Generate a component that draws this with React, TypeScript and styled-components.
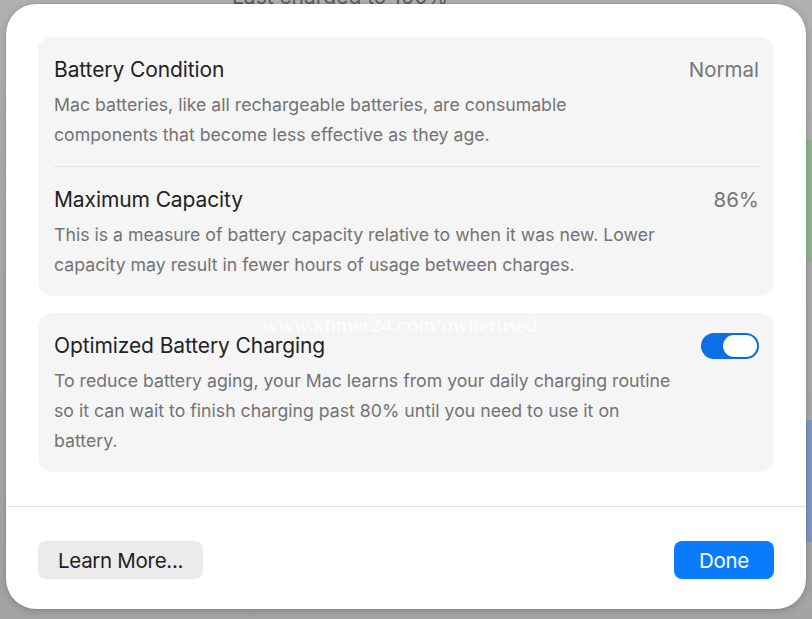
import React from "react";
import styled, { createGlobalStyle } from "styled-components";

const GlobalStyle = createGlobalStyle`
  html, body {
    margin: 0;
    padding: 0;
    background: #ababab;
  }
  body {
    font-family: Inter, "Noto Sans", "Liberation Sans", sans-serif;
    -webkit-font-smoothing: antialiased;
  }
`;

interface Section {
  title: string;
  value?: string;
  lines: string[];
}

const healthSections: Section[] = [
  {
    title: "Battery Condition",
    value: "Normal",
    lines: [
      "Mac batteries, like all rechargeable batteries, are consumable",
      "components that become less effective as they age.",
    ],
  },
  {
    title: "Maximum Capacity",
    value: "86%",
    lines: [
      "This is a measure of battery capacity relative to when it was new. Lower",
      "capacity may result in fewer hours of usage between charges.",
    ],
  },
];

const chargingLines = [
  "To reduce battery aging, your Mac learns from your daily charging routine",
  "so it can wait to finish charging past 80% until you need to use it on",
  "battery.",
];

const Description: React.FC<{ lines: string[] }> = ({ lines }) => (
  <StyledDescription>
    {lines.map((line, i) => (
      <StyledLine key={i}>{line}</StyledLine>
    ))}
  </StyledDescription>
);

const App: React.FC = () => {
  return (
    <>
      <GlobalStyle />
      <StyledDesktop>
        <StyledBehindText>Last charged to 100%</StyledBehindText>
        <StyledEdgeStrip $top={140} $height={122} $color="#8fb58c" />
        <StyledEdgeStrip $top={420} $height={122} $color="#7d99c2" />
        <StyledDialog>
          <StyledBody>
            <StyledCard>
              {healthSections.map((section, i) => (
                <React.Fragment key={section.title}>
                  {i > 0 && <StyledDivider />}
                  <StyledSection>
                    <StyledHeaderRow>
                      <StyledTitle>{section.title}</StyledTitle>
                      <StyledValue>{section.value}</StyledValue>
                    </StyledHeaderRow>
                    <Description lines={section.lines} />
                  </StyledSection>
                </React.Fragment>
              ))}
            </StyledCard>
            <StyledCard>
              <StyledWatermark>www.khmer24.com/ownerused</StyledWatermark>
              <StyledSection>
                <StyledHeaderRow>
                  <StyledTitle>Optimized Battery Charging</StyledTitle>
                  <StyledToggle $on>
                    <StyledKnob />
                  </StyledToggle>
                </StyledHeaderRow>
                <Description lines={chargingLines} />
              </StyledSection>
            </StyledCard>
          </StyledBody>
          <StyledFooter>
            <StyledButton>Learn More...</StyledButton>
            <StyledButton $primary>Done</StyledButton>
          </StyledFooter>
        </StyledDialog>
      </StyledDesktop>
    </>
  );
};
export default App;

const StyledDesktop = styled.div`
  position: relative;
  width: 812px;
  height: 619px;
  overflow: hidden;
  background: linear-gradient(180deg, #b0b0b0 0%, #a9a9a9 60%, #a4a4a4 100%);
  padding: 4px 6px 10px 6px;
  box-sizing: border-box;
  display: flex;
`;

const StyledBehindText = styled.div`
  position: absolute;
  top: -16px;
  left: 232px;
  font-size: 21px;
  color: #5c5c5c;
`;

const StyledEdgeStrip = styled.div<{ $top: number; $height: number; $color: string }>`
  position: absolute;
  right: 0;
  top: ${(p) => p.$top}px;
  height: ${(p) => p.$height}px;
  width: 8px;
  background: ${(p) => p.$color};
`;

const StyledDialog = styled.div`
  position: relative;
  flex: 1 1 auto;
  display: flex;
  flex-direction: column;
  background: #ffffff;
  border-radius: 30px;
  box-shadow: 0 2px 8px rgba(0, 0, 0, 0.18), 0 0 0 0.5px rgba(0, 0, 0, 0.12);
  overflow: hidden;
`;

const StyledBody = styled.div`
  display: flex;
  flex-direction: column;
  gap: 17px;
  padding: 33px 32px 34px 32px;
  border-bottom: 1px solid #e2e2e2;
`;

const StyledCard = styled.div`
  position: relative;
  display: flex;
  flex-direction: column;
  background: #f5f5f5;
  border-radius: 14px;
  padding: 0 15px 0 16px;
`;

const StyledSection = styled.div`
  display: flex;
  flex-direction: column;
  gap: 8px;
  padding: 21px 0 16px 0;
`;

const StyledDivider = styled.div`
  height: 1px;
  background: #e4e4e4;
`;

const StyledHeaderRow = styled.div`
  display: flex;
  align-items: center;
  justify-content: space-between;
  height: 24px;
`;

const StyledTitle = styled.div`
  font-size: 21px;
  line-height: 24px;
  color: #232323;
  letter-spacing: -0.1px;
`;

const StyledValue = styled.div`
  font-size: 20.5px;
  line-height: 24px;
  color: #777777;
`;

const StyledDescription = styled.div`
  display: flex;
  flex-direction: column;
  font-size: 17.7px;
  line-height: 30px;
  color: #737373;
`;

const StyledLine = styled.span`
  white-space: nowrap;
`;

const StyledToggle = styled.div<{ $on?: boolean }>`
  width: 58px;
  height: 26px;
  border-radius: 13px;
  background: ${(p) => (p.$on ? "#0b70e6" : "#dcdcdc")};
  box-sizing: border-box;
  padding: 2px;
  display: flex;
  justify-content: ${(p) => (p.$on ? "flex-end" : "flex-start")};
`;

const StyledKnob = styled.div`
  width: 34px;
  height: 22px;
  border-radius: 11px;
  background: #ffffff;
  box-shadow: 0 0.5px 1.5px rgba(0, 0, 0, 0.25);
`;

const StyledWatermark = styled.div`
  position: absolute;
  top: -1px;
  left: 224px;
  font-family: "Liberation Serif", serif;
  font-size: 22px;
  color: rgba(255, 255, 255, 0.85);
  pointer-events: none;
`;

const StyledFooter = styled.div`
  display: flex;
  justify-content: space-between;
  align-items: flex-start;
  padding: 34px 32px 0 32px;
`;

const StyledButton = styled.button<{ $primary?: boolean }>`
  height: 38px;
  padding: 0 ${(p) => (p.$primary ? 25 : 20)}px;
  border: none;
  border-radius: 8px;
  font-family: inherit;
  font-size: 20.5px;
  letter-spacing: -0.3px;
  color: ${(p) => (p.$primary ? "#ffffff" : "#1f1f1f")};
  background: ${(p) => (p.$primary ? "#0b7bfe" : "#ebebeb")};
  cursor: pointer;
`;
